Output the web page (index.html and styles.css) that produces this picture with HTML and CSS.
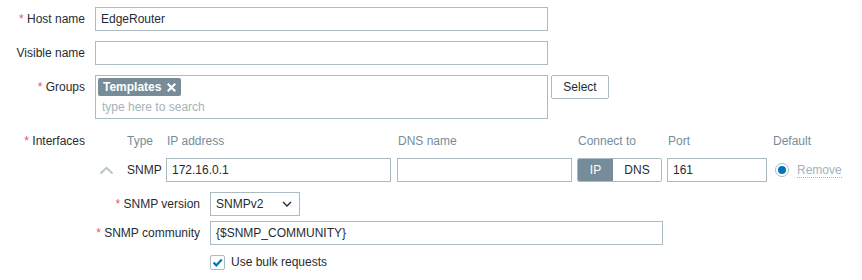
FILE: index.html
```html
<!DOCTYPE html>
<html>
<head>
<meta charset="utf-8">
<link rel="stylesheet" href="styles.css">
</head>
<body>
<div class="form">
  <div class="lbl"><span class="req">*</span> Host name</div>
  <div class="ctl"><div class="field w453">EdgeRouter</div></div>

  <div class="lbl">Visible name</div>
  <div class="ctl"><div class="field w453"></div></div>

  <div class="lbl"><span class="req">*</span> Groups</div>
  <div class="ctl groups-row">
    <div class="multiselect">
      <span class="tag">Templates <svg class="tag-x" width="9" height="9" viewBox="0 0 9 9"><path d="M1.5 1.5 L7.5 7.5 M7.5 1.5 L1.5 7.5" stroke="#fff" stroke-width="2.2" stroke-linecap="square"/></svg></span>
      <div class="placeholder">type here to search</div>
    </div>
    <div class="btn">Select</div>
  </div>

  <div class="lbl"><span class="req">*</span> Interfaces</div>
  <div class="ctl">
    <div class="iface">
      <div class="ihead">
        <div class="c-chev"></div>
        <div class="c-type">Type</div>
        <div class="c-ip">IP address</div>
        <div class="c-dns">DNS name</div>
        <div class="c-conn">Connect to</div>
        <div class="c-port">Port</div>
        <div class="c-def">Default</div>
      </div>
      <div class="irow">
        <div class="c-chev"><svg width="15" height="9" viewBox="0 0 15 9"><path d="M1.5 7.5 L7.5 1.8 L13.5 7.5" fill="none" stroke="#b9c4ca" stroke-width="2"/></svg></div>
        <div class="c-type dark">SNMP</div>
        <div class="c-ip"><div class="field w225">172.16.0.1</div></div>
        <div class="c-dns"><div class="field w175"></div></div>
        <div class="c-conn"><div class="seg"><span class="seg-on">IP</span><span class="seg-off">DNS</span></div></div>
        <div class="c-port"><div class="field w100">161</div></div>
        <div class="c-def"><span class="radio"><span class="dot"></span></span><span class="remove">Remove</span></div>
      </div>
      <div class="snmp">
        <div class="slbl"><span class="req">*</span> SNMP version</div>
        <div><div class="select">SNMPv2<svg class="sel-arrow" width="10" height="6" viewBox="0 0 10 6"><path d="M1 1 L5 5 L9 1" fill="none" stroke="#1f2c33" stroke-width="1.3"/></svg></div></div>
        <div class="slbl"><span class="req">*</span> SNMP community</div>
        <div><div class="field w453">{$SNMP_COMMUNITY}</div></div>
        <div></div>
        <div class="chk-row"><span class="chk"><svg width="13" height="13" viewBox="0 0 13 13"><path d="M2.5 6.5 L5.3 9.3 L10.8 3.5" fill="none" stroke="#0275b8" stroke-width="2.2"/></svg></span>Use bulk requests</div>
      </div>
    </div>
  </div>
</div>
</body>
</html>
```
FILE: styles.css
```css
* { box-sizing: border-box; }
body {
  margin: 0;
  background: #fff;
  font-family: "Liberation Sans", Arial, sans-serif;
  font-size: 12px;
  color: #1f2c33;
}
.form {
  display: grid;
  grid-template-columns: 85px 1fr;
  column-gap: 10px;
  row-gap: 10px;
  padding-top: 7px;
}
.lbl {
  text-align: right;
  line-height: 24px;
  white-space: nowrap;
}
.req { color: #e45959; }
.ctl { min-width: 0; }
.field {
  height: 24px;
  border: 1px solid #acbbc2;
  background: #fff;
  padding: 0 5px;
  line-height: 22px;
  white-space: nowrap;
  overflow: hidden;
}
.w453 { width: 453px; }
.w225 { width: 225px; }
.w175 { width: 175px; }
.w100 { width: 100px; }
.groups-row {
  display: flex;
  align-items: flex-start;
  gap: 3px;
}
.multiselect {
  width: 453px;
  height: 44px;
  border: 1px solid #acbbc2;
  padding: 2px 0 0 2px;
}
.tag {
  display: inline-flex;
  align-items: center;
  gap: 6px;
  height: 18px;
  padding: 0 5px 0 5px;
  background: #768d99;
  color: #fff;
  border-radius: 2px;
  font-weight: bold;
  line-height: 18px;
}
.tag-x { display: block; }
.placeholder {
  color: #a3b3bb;
  line-height: 21px;
  padding-top: 1px;
  padding-left: 4px;
}
.btn {
  width: 58px;
  height: 24px;
  border: 1px solid #acbbc2;
  border-radius: 2px;
  text-align: center;
  line-height: 22px;
  background: #fff;
}
.iface { display: flex; flex-direction: column; }
.ihead, .irow { display: flex; align-items: center; }
.ihead { height: 24px; color: #768d99; }
.irow { height: 24px; margin-top: 5px; }
.c-chev { width: 32px; padding-left: 4px; display: flex; align-items: center; }
.c-type { width: 39px; }
.c-ip { width: 231px; }
.c-dns { width: 180px; }
.c-conn { width: 90px; }
.c-port { width: 106px; }
.c-def { display: flex; align-items: center; }
.ihead .c-ip, .ihead .c-dns, .ihead .c-conn, .ihead .c-port { padding-left: 1px; }
.dark { color: #1f2c33; }
.seg {
  display: flex;
  width: 85px;
  height: 24px;
  border: 1px solid #acbbc2;
  border-radius: 2px;
  overflow: hidden;
}
.seg span { line-height: 22px; text-align: center; }
.seg-on { width: 35px; background: #768d99; color: #fff; }
.seg-off { flex: 1; background: #fff; }
.radio {
  width: 14px;
  height: 14px;
  margin-left: 2px;
  border: 1px solid #acbbc2;
  border-radius: 50%;
  display: flex;
  align-items: center;
  justify-content: center;
}
.dot { width: 8px; height: 8px; border-radius: 50%; background: #0275b8; }
.remove {
  margin-left: 8px;
  color: #a3b3bb;
  border-bottom: 1px dotted #a3b3bb;
  line-height: 14px;
}
.snmp {
  display: grid;
  grid-template-columns: 105px 1fr;
  column-gap: 10px;
  row-gap: 5px;
  margin-top: 10px;
}
.slbl { text-align: right; line-height: 24px; white-space: nowrap; }
.select {
  width: 90px;
  height: 24px;
  border: 1px solid #acbbc2;
  padding: 0 5px;
  line-height: 22px;
  display: flex;
  align-items: center;
  justify-content: space-between;
}
.sel-arrow { margin-right: 2px; }
.chk-row {
  display: flex;
  align-items: center;
  height: 24px;
  gap: 6px;
}
.chk {
  width: 15px;
  height: 15px;
  border: 1px solid #acbbc2;
  border-radius: 2px;
  display: flex;
  align-items: center;
  justify-content: center;
}
```
